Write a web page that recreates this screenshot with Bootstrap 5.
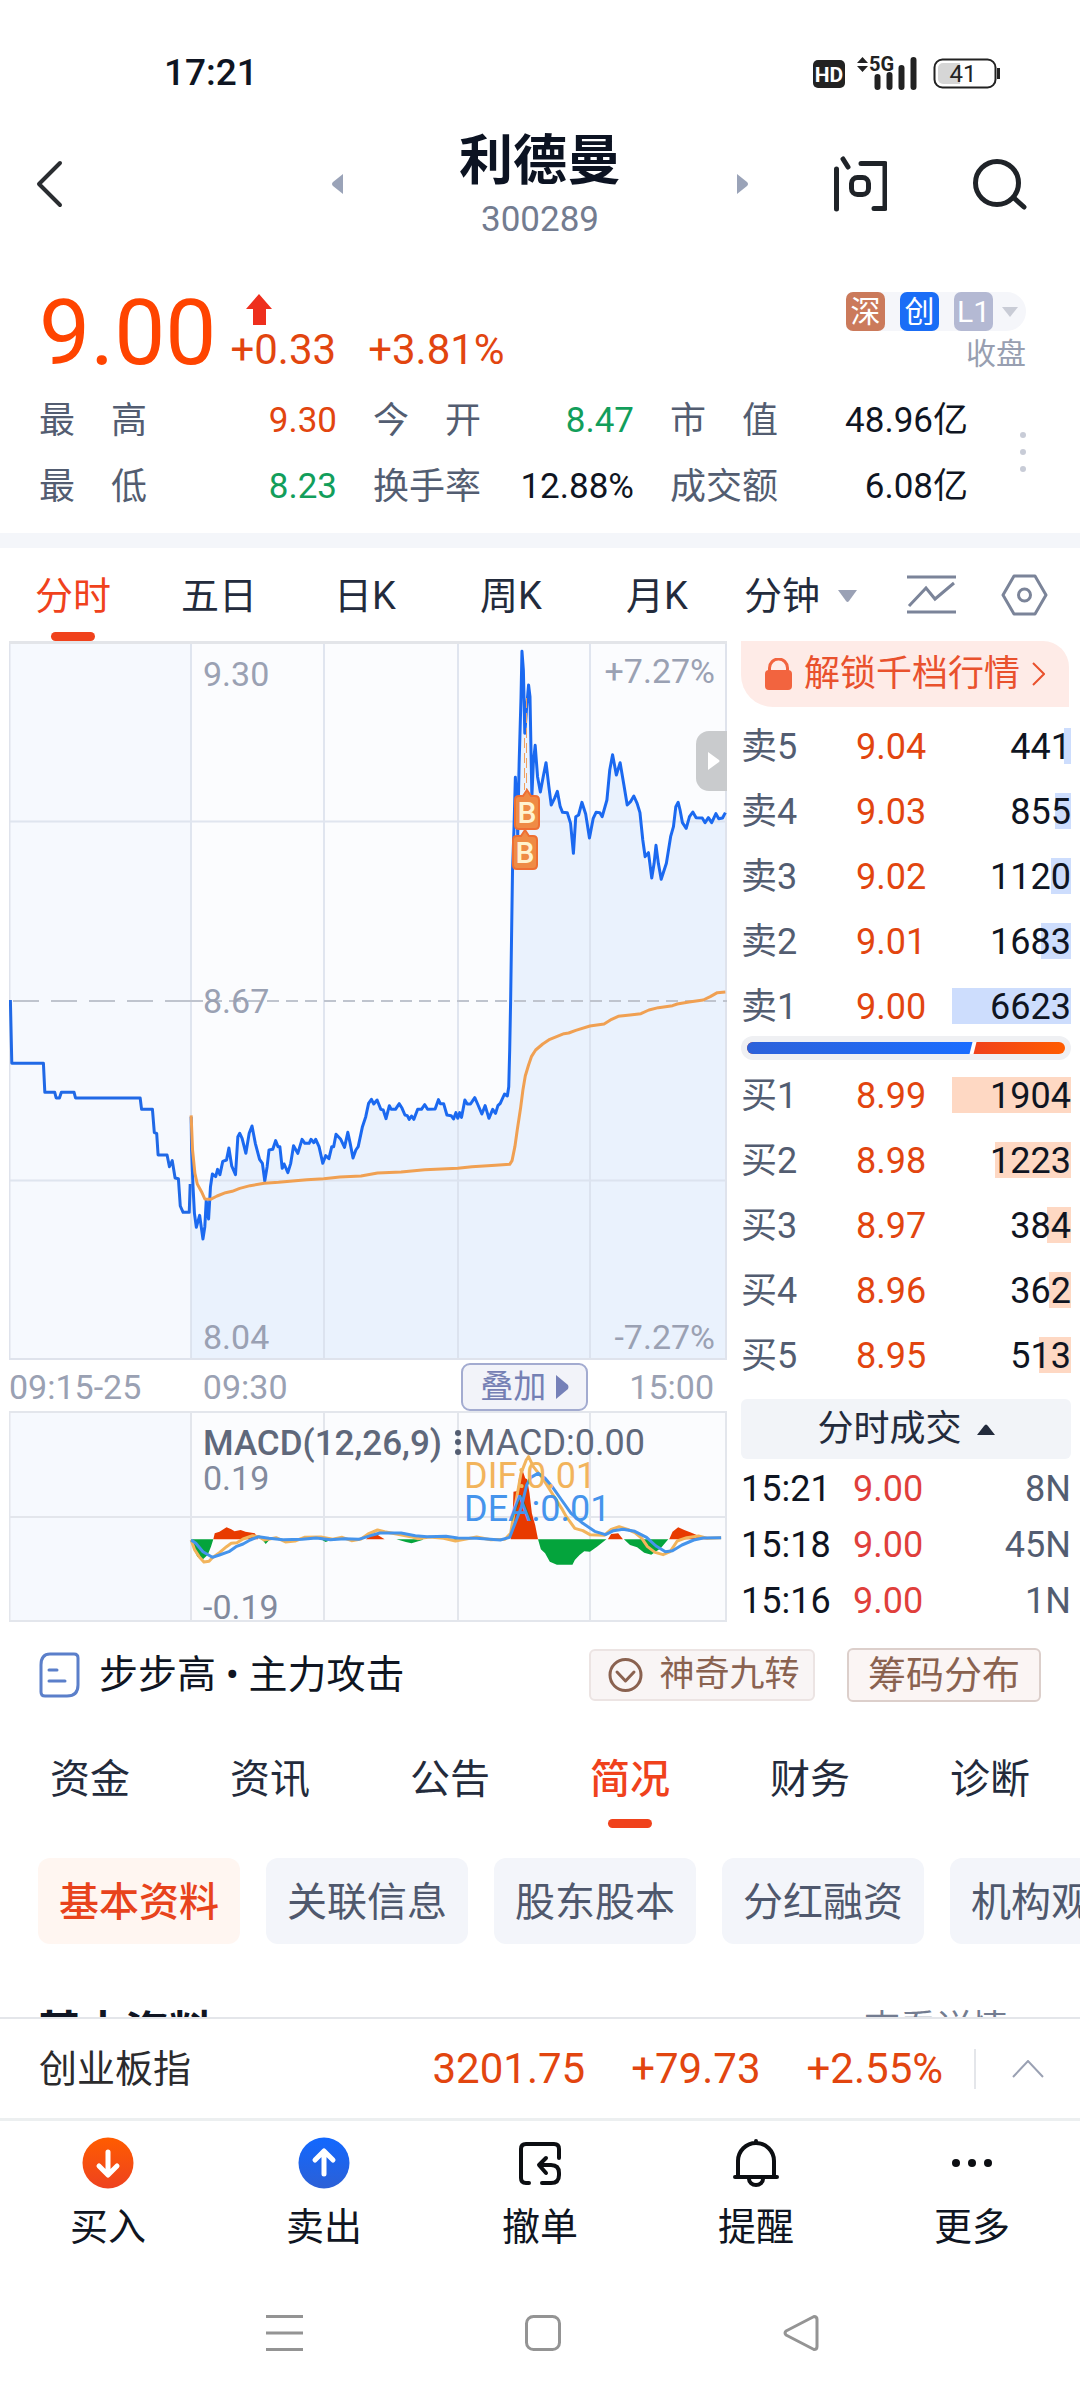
<!DOCTYPE html>
<html lang="zh-CN">
<head>
<meta charset="utf-8">
<meta name="viewport" content="width=device-width, initial-scale=1">
<title>利德曼 300289</title>
<link href="https://cdn.jsdelivr.net/npm/bootstrap@5.3.0/dist/css/bootstrap.min.css" rel="stylesheet">
<style>
:root{--up:#e2450f;--hot:#f0421c;--down:#129e5b;--ink:#0f1522;--navy:#232b3c;--slate:#535d71;--mute:#9aa1b3;--soft:#f3f5fa}
body{font-family:Roboto,"Noto Sans CJK SC",sans-serif;color:var(--ink);background:#fff;font-size:36px;line-height:36px}
a{color:inherit;text-decoration:none}
svg{display:block;flex-shrink:0}
.app-btn{padding:0;border:0;background:none;color:inherit;font:inherit}
.up{color:var(--up)}.down{color:var(--down)}
.status{height:96px;padding:50px 80px 0 164px;font-size:37px;font-weight:500}
.head{height:176px}
.head-side{width:332px;padding:0 53px 0 36px;gap:85px}
.head-mid{flex:1 1 0}
.head-name{font-size:54px;line-height:58px;font-weight:700;margin:14px 0 0;color:#0c1322}
.head-code{font-size:35px;line-height:58px;color:#737c90}
.quote{padding:16px 54px 0 39px;height:115px}
.quote-price{font-size:91px;line-height:91px;color:#ff4400}
.quote-move{margin:6px 0 0 14px}
.quote-chg{font-size:42px;line-height:42px;gap:32px;margin-top:3px}
.tags{background:#f5f6fa;border-radius:7px 20px 20px 7px;gap:15px}
.tag{width:39px;height:39px;border-radius:7px;color:#fff;font-size:30px;line-height:39px;text-align:center}
.tag-sz{background:#cb7a5b}.tag-cy{background:#1a6df6}.tag-l1{background:#b4b9d3}
.tag-more{width:72px;gap:9px}
.session{font-size:30px;line-height:46px;color:#989fb1}
.stats{padding:1px 54px 13px 39px;line-height:66px;gap:36px}
.stats dl{margin:0}
.stats dt{font-weight:400;color:var(--slate)}
.stats dd{margin:0;font-size:35px}
.col-wide{flex:298 1 0}.col-slim{flex:261 1 0}
.band{height:15px;background:#f4f6fa}
.periods{height:93px;font-size:38px;color:var(--navy)}
.periods .app-btn{padding-top:3px}
.periods .period{width:146px}
.on-tab{color:var(--hot)!important;position:relative}
.on-tab::after{content:"";position:absolute;left:50%;bottom:0;width:44px;height:9px;margin-left:-22px;border-radius:5px;background:var(--hot)}
.board{padding:0 9px;gap:14px}
.board-left{flex:718 1 0;min-width:0}
.board-right{flex:330 1 0;min-width:0}
.chart{width:100%;height:auto}
.chart text{font-family:Roboto,sans-serif;font-size:34px;fill:var(--mute)}
.times{height:51px;padding-top:2px;font-size:34px;color:var(--mute)}
.times .t-a{width:27%}.times .t-b{width:36%}
.overlay-btn{width:127px;height:48px;border:2px solid #a3abd0;border-radius:9px;background:#f2f3f9;color:#7580b4;gap:10px;font-size:33px}
.unlock{height:66px;margin:0 2px 4px 0;background:#feebe7;border-radius:0 26px 0 32px;color:#e9512d;gap:12px}
.book,.deals{width:100%;table-layout:fixed;border-collapse:collapse}
.book td,.book th{padding:18px 0 11px;font-weight:400;white-space:nowrap}
.book th{color:var(--slate);width:115px}
.book .b-price{width:95px}
.book .b-vol{text-align:right;position:relative}
.book .vol-bar{position:absolute;right:0;top:17px;height:36px;z-index:0}
.book .vol-num{position:relative;z-index:1}
.sell .vol-bar{background:#cdddfd}.buy .vol-bar{background:#fed8c3}
.balance{padding:6px;border-radius:12px;background:#eff0f3}
.balance-in{height:12px;border-radius:6px;overflow:hidden;background:linear-gradient(90deg,#f0421c 71%,#ff5c00)}
.balance-sell{background:linear-gradient(90deg,#2d62da,#1a6dff)}
.balance-gap{width:4px;background:#fff;transform:skewX(-14deg);margin-left:-2px}
.deal-head{height:60px;margin-top:14px;border-radius:6px;background:#f2f4f8;color:var(--navy);gap:15px;width:100%}
.deals td{padding:12px 0 8px}
.deals tr:last-child td{padding-bottom:3px}
.deals .d-time{width:112px}
.deals .d-price{color:#e03f3b;width:100px}
.deals .d-vol{text-align:right;color:var(--slate)}
.signal{height:106px;padding:0 39px;font-size:39px}
.pill-a,.pill-b{color:#8a6250;border:2px solid #ece4e3;border-radius:6px;background:#f9f5f5;height:52px;width:226px;gap:16px;font-size:35px}
.pill-a{padding-left:4px}
.pill-b{width:194px;height:54px;margin-left:32px;border-color:#dccfcb;background:#fbf5f4;font-size:38px}
.sections{height:100px;font-size:40px;color:var(--navy)}
.sections .app-btn{padding-top:3px}
.sections .on-tab{font-weight:500}
.chips{margin-top:30px;padding-left:38px;gap:26px;font-size:40px}
.chip{height:86px;width:202px;padding-top:4px;border-radius:12px;background:var(--soft);color:#4f586d;white-space:nowrap;flex-shrink:0}
.chip-on{background:#fff6f1;color:#e8431c;font-weight:500}
.block-head{margin-top:59px;padding:0 45px 0 37px}
.block-head h2{font-size:44px;line-height:60px;font-weight:700;margin:0}
.more-link{color:#737c90;line-height:52px}
.index{height:104px;border-top:2px solid #e4e6ea;border-bottom:3px solid #eceff0;padding:0 36px 0 39px;font-size:38px;color:#2b2b2d}
.index .num{font-size:42px;gap:46px}
.rule{width:2px;height:40px;background:#e4e6ea;margin:0 36px 0 31px}
.dock{padding:16px 0 14px}
.dock .app-btn{font-size:38px;line-height:50px}
.dock svg{margin-bottom:13px}
.sys{height:134px;padding:0 261px 0 266px}
</style>
<script src="https://cdn.jsdelivr.net/npm/bootstrap@5.3.0/dist/js/bootstrap.bundle.min.js"></script>
</head>
<body>
<div class="d-flex flex-column vh-100 overflow-hidden">
<main class="flex-grow-1 overflow-hidden">

<div class="status d-flex justify-content-between align-items-center">
  <span>17:21</span>
  <svg width="188" height="44" viewBox="812 50 188 44" role="img" aria-label="HD 5G 41%">
    <rect x="813" y="59" width="32" height="28" rx="5" fill="#222"/>
    <text x="829" y="81" text-anchor="middle" font-size="21" font-weight="700" fill="#fff">HD</text>
    <path d="M857 62l5.500-6 5.500 6zM857 65l5.500 6 5.500-6z" fill="#222"/>
    <text x="869" y="70" font-size="20" font-weight="700" fill="#222">5G</text>
    <path d="M877.500 76v10M889.500 74v12M901.500 67v19M913.500 59v27" stroke="#222" stroke-width="6" stroke-linecap="round"/>
    <rect x="934.500" y="58.500" width="61" height="28" rx="8" fill="#fff" stroke="#222" stroke-width="2"/>
    <path d="M943 62h17v21h-17a5 5 0 0 1-5-5v-11a5 5 0 0 1 5-5z" fill="#d6d6d6"/>
    <path d="M998.500 67v11" stroke="#222" stroke-width="3"/>
    <text x="963" y="81" text-anchor="middle" font-size="24" font-weight="400" fill="#222">41</text>
  </svg>
</div>

<header class="head d-flex align-items-center">
  <div class="head-side">
    <button class="app-btn d-block" type="button" aria-label="返回"><svg width="28" height="50" viewBox="0 0 28 50" fill="none" stroke="#2a2d31" stroke-width="4" stroke-linecap="round" stroke-linejoin="round"><path d="M24 4L3 25l21 21"/></svg></button>
  </div>
  <div class="head-mid d-flex justify-content-between align-items-center">
    <button class="app-btn" type="button" aria-label="上一只"><svg width="11" height="20" fill="#9aa3b8"><path d="M11 0v20L1 12q-2-2 0-4z"/></svg></button>
    <div class="text-center"><h1 class="head-name">利德曼</h1><div class="head-code">300289</div></div>
    <button class="app-btn" type="button" aria-label="下一只"><svg width="11" height="20" fill="#9aa3b8"><path d="M0 0v20l10-8q2-2 0-4z"/></svg></button>
  </div>
  <div class="head-side d-flex justify-content-end align-items-center">
    <button class="app-btn" type="button" aria-label="问"><svg width="54" height="58" viewBox="0 0 54 58" fill="none" stroke="#1f2328" stroke-width="5" stroke-linecap="round" stroke-linejoin="round"><path d="M3.500 14v40M10 4l5 8M28 8.500h24v45h-11"/><rect x="18.500" y="22.500" width="17" height="17" rx="6"/></svg></button>
    <button class="app-btn" type="button" aria-label="搜索"><svg width="55" height="54" viewBox="0 0 55 54" fill="none" stroke="#1f2328" stroke-width="5" stroke-linecap="round"><circle cx="25" cy="26" r="21.500"/><path d="M42 41l10 9"/></svg></button>
  </div>
</header>

<section class="quote d-flex justify-content-between">
  <div class="d-flex">
    <div class="quote-price">9.00</div>
    <div class="quote-move">
      <svg class="ms-3" width="26" height="32" viewBox="0 0 26 32"><path d="M13 0l13 15h-6v16H7V15H0z" fill="#ee2f1d"/></svg>
      <div class="quote-chg d-flex up"><span>+0.33</span><span>+3.81%</span></div>
    </div>
  </div>
  <div class="d-flex flex-column align-items-end pt-1">
    <div class="tags d-flex">
      <span class="tag tag-sz">深</span><span class="tag tag-cy">创</span>
      <button class="app-btn tag-more d-flex align-items-center" type="button" aria-label="L1 行情"><span class="tag tag-l1">L1</span><svg width="16" height="10" fill="#c9ccd6"><path d="M0 0h16L8 10z"/></svg></button>
    </div>
    <div class="session">收盘</div>
  </div>
</section>

<section class="stats d-flex align-items-center">
  <dl class="col-wide"><div class="d-flex justify-content-between"><dt>最　高</dt><dd class="up">9.30</dd></div><div class="d-flex justify-content-between"><dt>最　低</dt><dd class="down">8.23</dd></div></dl>
  <dl class="col-slim"><div class="d-flex justify-content-between"><dt>今　开</dt><dd class="down">8.47</dd></div><div class="d-flex justify-content-between"><dt>换手率</dt><dd>12.88%</dd></div></dl>
  <dl class="col-wide"><div class="d-flex justify-content-between"><dt>市　值</dt><dd>48.96亿</dd></div><div class="d-flex justify-content-between"><dt>成交额</dt><dd>6.08亿</dd></div></dl>
  <button class="app-btn ps-3 pb-1" type="button" aria-label="更多指标"><svg width="6" height="40" fill="#c8ccd7"><circle cx="3" cy="3" r="3"/><circle cx="3" cy="20" r="3"/><circle cx="3" cy="37" r="3"/></svg></button>
</section>
<div class="band"></div>

<nav class="periods d-flex align-items-stretch" aria-label="周期">
  <button class="app-btn period on-tab" type="button">分时</button>
  <button class="app-btn period" type="button">五日</button>
  <button class="app-btn period" type="button">日K</button>
  <button class="app-btn period" type="button">周K</button>
  <button class="app-btn period" type="button">月K</button>
  <button class="app-btn d-flex align-items-center" style="gap:18px;margin-left:14px" type="button">分钟<svg width="19" height="12" fill="#9aa1b5"><path d="M0 0h19l-8 11q-1.500 2-3 0z"/></svg></button>
  <div class="d-flex align-items-center ms-auto" style="gap:45px;padding-right:32px">
    <button class="app-btn pt-0" type="button" aria-label="画线"><svg width="49" height="42" viewBox="0 0 49 42" fill="none" stroke="#7b8499" stroke-width="3"><path d="M0 3h49M0 38h49M2 32l17-18 9 11L47 9"/></svg></button>
    <button class="app-btn pt-0" type="button" aria-label="设置"><svg width="47" height="42" viewBox="0 0 47 42" fill="none" stroke="#7b8499" stroke-width="3" stroke-linejoin="round"><path d="M13 2h21l11 19-11 19H13L2 21z"/><circle cx="23.500" cy="21" r="6"/></svg></button>
  </div>
</nav>

<section class="board d-flex">
  <div class="board-left">
    <svg class="chart" viewBox="9 641 718 719" role="img" aria-label="分时走势">
      <rect x="9" y="641" width="718" height="719" fill="#fbfcfe"/>
      <rect x="9" y="641" width="182" height="719" fill="#f6f9fe"/>
      <g transform="translate(0 1000) scale(.47194 .33333)">
        <path fill="#eaf2fd" d="M405 1080V350L409 560 416 682 423 646 430 717 437 602 442 657 450 522 466 524 472 484 485 444 499 524 508 400 521 460 534 378 550 478 561 543 570 450 584 422 593 440 598 505 610 518 622 437 631 460 640 418 669 418 684 490 703 440 712 403 730 442 737 397 748 474 759 440 775 350 787 298 799 300 818 356 825 317 846 311 867 358 885 328 922 327 929 299 947 345 978 352 985 300 1006 293 1021 342 1028 317 1036 355 1060 310 1069 282 1078 260 1082 0 1089-510 1092-668 1100-710 1106-1046 1112-800 1120-945 1127-610 1134-764 1145-624 1157-712 1168-585 1181-626 1192-563 1202-562 1215-440 1220-550 1233-593 1249-486 1263-563 1276-550 1286-600 1298-736 1306-675 1314-712 1329-585 1343-612 1356-562 1367-430 1381-366 1390-464 1401-362 1412-410 1427-520 1437-593 1454-515 1468-564 1494-532 1537-562V1080z"/>
      </g>
      <path d="M9 821.500H727M9 1180.500H727M191 641V1360M324 641V1360M458 641V1360M590 641V1360" stroke="#d7dde9" stroke-opacity=".75" stroke-width="2" fill="none"/>
      <path d="M9 1359H727M9.500 641V1360M726 641V1360" stroke="#dfe3ec" stroke-width="2" fill="none"/>
      <path d="M9 642.500H727" stroke="#e3e5e9" stroke-width="3"/>
      <path d="M13 1001H191" stroke="#bfc4ce" stroke-width="2" stroke-dasharray="26 12"/>
      <path d="M191 1001H727" stroke="#bfc4ce" stroke-width="2" stroke-dasharray="12 7"/>
      <text x="203" y="686">9.30</text><text x="203" y="1013">8.67</text><text x="203" y="1349">8.04</text>
      <text x="715" y="683" text-anchor="end">+7.27%</text><text x="715" y="1349" text-anchor="end">-7.27%</text>
      <g transform="translate(0 1000) scale(.47194 .33333)" fill="none" stroke-width="3" stroke-linejoin="round">
        <polyline vector-effect="non-scaling-stroke" stroke="#2069e6" points="22,0 25,190 92,190 95,277 116,277 119,294 126,294 130,277 157,277 160,294 297,294 300,328 323,328 327,398 332,400 335,465 354,465 359,500 365,482 371,534 378,536 382,618 388,637 401,637 403,552"/>
        <polyline vector-effect="non-scaling-stroke" stroke="#1b69f0" points="405,350 406,450 409,560 412,640 416,682 423,646 430,717 434,680 437,602 442,657 446,560 450,522 457,530 461,508 466,524 472,484 480,480 485,444 491,498 499,524 504,410 508,400 513,415 521,460 528,400 534,378 541,430 550,478 556,490 561,543 566,500 570,450 578,448 584,422 589,440 593,440 598,505 602,492 610,518 616,490 622,437 631,460 640,418 646,430 655,430 659,418 665,428 669,418 676,440 684,490 690,467 697,476 703,440 707,440 712,403 722,418 730,442 737,397 742,430 748,474 754,450 759,440 768,380 775,350 781,310 787,298 792,312 799,300 807,328 812,330 818,356 825,317 829,328 838,328 846,311 852,325 858,345 863,347 867,358 872,348 877,358 885,328 893,328 900,314 906,328 922,327 929,299 933,311 940,311 947,345 956,347 961,357 966,338 970,355 974,338 978,352 985,300 990,312 997,312 1006,293 1012,312 1021,342 1028,317 1036,355 1044,328 1050,340 1055,317 1060,310 1069,282 1075,288 1078,260 1080,150 1082,0 1086,-390 1089,-510 1092,-668 1095,-600 1097,-495 1100,-710 1104,-910 1106,-1046 1109,-990 1112,-800 1116,-880 1120,-945 1123,-910 1127,-610 1130,-710 1134,-764 1139,-670 1145,-624 1151,-670 1157,-712 1163,-640 1168,-585 1175,-605 1181,-626 1187,-580 1192,-563 1202,-562 1209,-530 1215,-440 1220,-550 1226,-555 1233,-593 1241,-558 1249,-486 1257,-545 1263,-563 1271,-562 1276,-550 1286,-600 1292,-690 1298,-736 1306,-675 1314,-712 1322,-645 1329,-585 1336,-595 1343,-612 1350,-590 1356,-562 1362,-480 1367,-430 1374,-442 1381,-366 1386,-410 1390,-464 1395,-410 1401,-362 1412,-410 1421,-490 1427,-520 1432,-580 1437,-593 1441,-570 1446,-532 1454,-515 1461,-550 1468,-564 1475,-547 1488,-546 1494,-532 1501,-547 1508,-532 1517,-559 1523,-544 1531,-546 1537,-562"/>
        <polyline vector-effect="non-scaling-stroke" stroke="#f0a052" points="405,346 408,450 413,520 418,552 427,575 434,597 446,598 460,588 478,578 492,574 508,565 530,557 560,550 590,547 620,543 650,539 686,536 720,531 765,528 800,519 850,516 900,509 970,505 1000,500 1050,496 1080,493 1085,482 1091,440 1096,390 1103,325 1108,270 1113,228 1120,195 1126,170 1135,150 1150,132 1165,118 1195,101 1205,99 1220,91 1250,78 1280,72 1296,58 1310,49 1335,45 1358,41 1375,30 1395,23 1425,17 1435,12 1460,6 1490,0 1505,-10 1520,-22 1537,-24"/>
      </g>
      <path d="M526.500 698V790M524.500 738V790" stroke="#f0a060" stroke-dasharray="10 5" fill="none"/>
      <g fill="#ef8b45" stroke="#ee6f33" stroke-width="2">
        <path d="M519 796h4l4-6 4 6h4q4 0 4 4v25q0 4-4 4h-16q-4 0-4-4v-25q0-4 4-4z"/>
        <path d="M517 836h4l4-6 4 6h4q4 0 4 4v25q0 4-4 4h-16q-4 0-4-4v-25q0-4 4-4z"/>
      </g>
      <text x="527" y="823" text-anchor="middle" style="font-size:30px;font-weight:500;fill:#fff3cf">B</text>
      <text x="525" y="863" text-anchor="middle" style="font-size:30px;font-weight:500;fill:#fff3cf">B</text>
      <path d="M727 731h-18a13 13 0 0 0-13 13v34a13 13 0 0 0 13 13h18z" fill="#c9cbcd"/>
      <path d="M708 752v18l11-8q1-1 0-2z" fill="#fff"/>
    </svg>
    <div class="times d-flex align-items-center">
      <span class="t-a">09:15-25</span><span class="t-b">09:30</span>
      <button class="app-btn overlay-btn d-flex align-items-center justify-content-center" type="button">叠加<svg width="13" height="24" fill="#7580b8"><path d="M0 0v24l12-10q1-2 0-4z"/></svg></button>
      <span class="ms-auto" style="padding-right:13px">15:00</span>
    </div>
    <svg class="chart" viewBox="9 1411 718 211" role="img" aria-label="MACD">
      <rect x="9" y="1411" width="718" height="211" fill="#fbfcfe"/>
      <rect x="9" y="1411" width="182" height="211" fill="#f6f9fe"/>
      <path d="M9 1412H727M9 1517H727M9 1621H727M9.500 1411V1622M191 1411V1622M324 1411V1622M458 1411V1622M590 1411V1622M726 1411V1622" stroke="#e3e6ec" stroke-width="2"/>
      <text x="203" y="1455" style="font-size:35px;font-weight:500;fill:#5f687b">MACD(12,26,9)</text>
      <g fill="#535d71"><circle cx="458" cy="1433" r="3"/><circle cx="458" cy="1442" r="3"/><circle cx="458" cy="1452" r="3"/></g>
      <text x="203" y="1490" style="fill:#828a9d">0.19</text><text x="203" y="1619" style="fill:#828a9d">-0.19</text>
      <g transform="translate(0 1390) scale(.47194 .33333)">
        <path fill="#e83a00" d="M452 448L455 430 465 425 480 412 490 418 497 424 510 420 520 425 540 430 547 448zM775 448L785 438 797 432 815 448zM1082 448L1086 390 1088 305 1096 303 1100 260 1107 240 1113 265 1117 268 1122 310 1127 370 1134 405 1140 448zM1288 448L1295 432 1310 430 1320 448zM1418 448L1425 425 1437 412 1450 420 1465 428 1485 440 1500 448z"/>
        <path fill="#04a43c" d="M405 448L410 475 418 500 430 508 440 495 447 470 452 448zM555 448L563 462 572 448zM590 448L610 456 625 448zM680 448L690 456 705 448zM840 448L860 456 872 460 895 450 897 448zM950 448L965 456 980 448zM1140 448L1146 478 1155 490 1165 515 1180 524 1213 524 1218 510 1228 495 1238 484 1250 485 1265 470 1285 448zM1322 448L1335 465 1350 472 1365 488 1380 494 1400 475 1416 448z"/>
        <g fill="none" stroke-width="3" stroke-linejoin="round">
          <polyline vector-effect="non-scaling-stroke" stroke="#f2b45c" points="405,450 412,478 422,500 432,516 443,514 450,503 465,488 480,470 490,460 502,458 515,447 535,437 548,440 560,450 585,443 605,456 625,453 645,442 680,441 705,448 725,442 745,452 765,447 780,432 800,420 815,425 840,432 870,440 885,446 910,441 940,445 965,453 1010,441 1040,449 1070,448 1082,430 1092,345 1104,250 1115,210 1120,200 1130,230 1150,265 1172,315 1190,355 1200,380 1218,415 1235,422 1250,434 1280,436 1295,418 1312,410 1330,418 1345,428 1360,445 1372,470 1388,487 1405,494 1420,485 1435,453 1455,443 1480,438 1500,445 1528,443"/>
          <polyline vector-effect="non-scaling-stroke" stroke="#4594ec" points="405,450 415,460 430,485 450,502 465,495 485,485 500,470 515,462 530,450 548,440 570,445 600,449 640,448 670,444 700,449 730,446 760,448 785,437 805,429 850,429 880,437 905,440 945,439 970,444 1010,445 1060,450 1080,442 1090,405 1105,350 1116,285 1125,262 1140,250 1155,265 1170,290 1190,330 1210,370 1235,400 1260,424 1283,434 1300,422 1320,418 1345,424 1370,442 1390,468 1410,485 1425,482 1445,465 1470,450 1490,444 1528,443"/>
        </g>
      </g>
      <text x="464" y="1455" style="font-size:36px;fill:#5f687b">MACD:0.00</text>
      <text x="464" y="1488" style="font-size:36px;fill:#f2b45c">DIF:0.01</text>
      <text x="464" y="1521" style="font-size:36px;fill:#4594ec">DEA:0.01</text>
    </svg>
  </div>

  <div class="board-right">
    <a href="#" class="unlock d-flex align-items-center justify-content-center"><svg width="27" height="32" viewBox="0 0 27 32"><rect y="12" width="27" height="20" rx="4" fill="#f2643f"/><path d="M4.500 13v-3a9 9 0 0 1 18 0v3" fill="none" stroke="#f2643f" stroke-width="3"/></svg><span>解锁千档行情</span><svg width="13" height="24" viewBox="0 0 13 24" fill="none" stroke="#e9512d" stroke-width="2"><path d="M1 1l11 11L1 23"/></svg></a>
    <table class="book sell"><tbody>
      <tr><th scope="row">卖5</th><td class="b-price up">9.04</td><td class="b-vol"><span class="vol-bar" style="width:6%"></span><span class="vol-num">441</span></td></tr>
      <tr><th scope="row">卖4</th><td class="b-price up">9.03</td><td class="b-vol"><span class="vol-bar" style="width:13%"></span><span class="vol-num">855</span></td></tr>
      <tr><th scope="row">卖3</th><td class="b-price up">9.02</td><td class="b-vol"><span class="vol-bar" style="width:17%"></span><span class="vol-num">1120</span></td></tr>
      <tr><th scope="row">卖2</th><td class="b-price up">9.01</td><td class="b-vol"><span class="vol-bar" style="width:25%"></span><span class="vol-num">1683</span></td></tr>
      <tr><th scope="row">卖1</th><td class="b-price up">9.00</td><td class="b-vol"><span class="vol-bar" style="width:99%"></span><span class="vol-num">6623</span></td></tr>
    </tbody></table>
    <div class="balance"><div class="balance-in d-flex"><div class="balance-sell" style="width:71%"></div><div class="balance-gap"></div></div></div>
    <table class="book buy"><tbody>
      <tr><th scope="row">买1</th><td class="b-price up">8.99</td><td class="b-vol"><span class="vol-bar" style="width:99%"></span><span class="vol-num">1904</span></td></tr>
      <tr><th scope="row">买2</th><td class="b-price up">8.98</td><td class="b-vol"><span class="vol-bar" style="width:63%"></span><span class="vol-num">1223</span></td></tr>
      <tr><th scope="row">买3</th><td class="b-price up">8.97</td><td class="b-vol"><span class="vol-bar" style="width:20%"></span><span class="vol-num">384</span></td></tr>
      <tr><th scope="row">买4</th><td class="b-price up">8.96</td><td class="b-vol"><span class="vol-bar" style="width:18%"></span><span class="vol-num">362</span></td></tr>
      <tr><th scope="row">买5</th><td class="b-price up">8.95</td><td class="b-vol"><span class="vol-bar" style="width:27%"></span><span class="vol-num">513</span></td></tr>
    </tbody></table>
    <button class="app-btn deal-head d-flex align-items-center justify-content-center" type="button">分时成交<svg width="18" height="11" fill="#232b3c"><path d="M0 11h18L11 2q-2-3-4 0z"/></svg></button>
    <table class="deals"><tbody>
      <tr><td class="d-time">15:21</td><td class="d-price">9.00</td><td class="d-vol">8N</td></tr>
      <tr><td class="d-time">15:18</td><td class="d-price">9.00</td><td class="d-vol">45N</td></tr>
      <tr><td class="d-time">15:16</td><td class="d-price">9.00</td><td class="d-vol">1N</td></tr>
    </tbody></table>
  </div>
</section>

<section class="signal d-flex align-items-center">
  <a href="#" class="d-flex align-items-center" style="gap:19px"><svg width="41" height="46" viewBox="0 0 41 46" fill="none" stroke="#5b7fca" stroke-width="3" stroke-linecap="round"><path d="M11 2h24q4 0 4 4v27q0 11-11 11H6q-4 0-4-4V13Q2 2 11 2z"/><path d="M10 18h8M10 29h16"/></svg><span>步步高 • 主力攻击</span></a>
  <button class="app-btn pill-a d-flex align-items-center justify-content-center ms-auto" type="button"><svg width="35" height="36" viewBox="0 0 35 36" fill="none" stroke="#8a6250" stroke-width="3" stroke-linecap="round" stroke-linejoin="round"><circle cx="17.500" cy="18" r="15.500"/><path d="M9 15l8.500 9 8.500-9"/></svg>神奇九转</button>
  <button class="app-btn pill-b" type="button">筹码分布</button>
</section>

<nav class="sections d-flex" aria-label="栏目">
  <button class="app-btn w-100" type="button">资金</button>
  <button class="app-btn w-100" type="button">资讯</button>
  <button class="app-btn w-100" type="button">公告</button>
  <button class="app-btn w-100 on-tab" type="button">简况</button>
  <button class="app-btn w-100" type="button">财务</button>
  <button class="app-btn w-100" type="button">诊断</button>
</nav>

<div class="chips d-flex overflow-hidden">
  <button class="app-btn chip chip-on" type="button">基本资料</button>
  <button class="app-btn chip" type="button">关联信息</button>
  <button class="app-btn chip" type="button">股东股本</button>
  <button class="app-btn chip" type="button">分红融资</button>
  <button class="app-btn chip" type="button">机构观点</button>
</div>

<div class="block-head d-flex justify-content-between align-items-start">
  <h2>基本资料</h2>
  <a href="#" class="more-link d-flex align-items-center gap-3">查看详情<svg width="11" height="22" viewBox="0 0 11 22" fill="none" stroke="#737c90" stroke-width="2"><path d="M1 1l9 10-9 10"/></svg></a>
</div>
</main>

<footer class="flex-shrink-0">
  <div class="index d-flex align-items-center">
    <span>创业板指</span>
    <div class="d-flex ms-auto num up"><span>3201.75</span><span>+79.73</span><span>+2.55%</span></div>
    <div class="rule"></div>
    <button class="app-btn" type="button" aria-label="展开"><svg width="32" height="18" viewBox="0 0 32 18" fill="none" stroke="#9aa1b3" stroke-width="2"><path d="M1 17L16 1l15 16"/></svg></button>
  </div>
  <nav class="dock d-flex" aria-label="交易">
    <button class="app-btn w-100 d-flex flex-column align-items-center" type="button"><svg width="52" height="52" viewBox="0 0 52 52"><defs><linearGradient id="gb" x2="0" y2="1"><stop stop-color="#ff5c00"/><stop offset="1" stop-color="#ee421f"/></linearGradient><linearGradient id="gs" x2="0" y2="1"><stop stop-color="#1268ff"/><stop offset="1" stop-color="#2c60d6"/></linearGradient></defs><circle cx="26" cy="26" r="25.500" fill="url(#gb)"/><path d="M26 15v22M17 29l9 9 9-9" fill="none" stroke="#fff" stroke-width="5" stroke-linecap="round" stroke-linejoin="round"/></svg>买入</button>
    <button class="app-btn w-100 d-flex flex-column align-items-center" type="button"><svg width="52" height="52" viewBox="0 0 52 52"><circle cx="26" cy="26" r="25.500" fill="url(#gs)"/><path d="M26 37V15M17 23l9-9 9 9" fill="none" stroke="#fff" stroke-width="5" stroke-linecap="round" stroke-linejoin="round"/></svg>卖出</button>
    <button class="app-btn w-100 d-flex flex-column align-items-center" type="button"><svg width="52" height="52" viewBox="0 0 52 52" fill="none" stroke="#0c0e12" stroke-width="4" stroke-linecap="round" stroke-linejoin="round"><path d="M15 46h-3q-5 0-5-5V12q0-5 5-5h28q5 0 5 5v9M32 21l-7 7 7 8M26 28h11q8 0 8 8v2q0 8-8 8h-9"/></svg>撤单</button>
    <button class="app-btn w-100 d-flex flex-column align-items-center" type="button"><svg width="52" height="52" viewBox="0 0 52 52" fill="none" stroke="#0c0e12" stroke-width="4" stroke-linecap="round" stroke-linejoin="round"><path d="M8 40V24a18 18 0 0 1 36 0v16M5 40h42M26 6V4M19 42a7 6 0 0 0 14 0"/></svg>提醒</button>
    <button class="app-btn w-100 d-flex flex-column align-items-center" type="button"><svg width="52" height="52" viewBox="0 0 52 52" fill="#0c0e12"><circle cx="10" cy="26" r="4"/><circle cx="26" cy="26" r="4"/><circle cx="42" cy="26" r="4"/></svg>更多</button>
  </nav>
  <div class="sys d-flex align-items-center justify-content-between">
    <button class="app-btn" type="button" aria-label="最近任务"><svg width="37" height="36" viewBox="0 0 37 36" stroke="#949494" stroke-width="3"><path d="M0 1.500h37M0 18h37M0 34.500h37"/></svg></button>
    <button class="app-btn" type="button" aria-label="主屏幕"><svg width="36" height="36" viewBox="0 0 36 36" fill="none" stroke="#949494" stroke-width="3"><rect x="1.500" y="1.500" width="33" height="33" rx="7"/></svg></button>
    <button class="app-btn" type="button" aria-label="返回"><svg width="36" height="36" viewBox="0 0 36 36" fill="none" stroke="#949494" stroke-width="3" stroke-linejoin="round"><path d="M31 1.500q3 0 3 3v27q0 3-3 3L3 20q-2-2 0-4z"/></svg></button>
  </div>
</footer>
</div>
</body>
</html>
